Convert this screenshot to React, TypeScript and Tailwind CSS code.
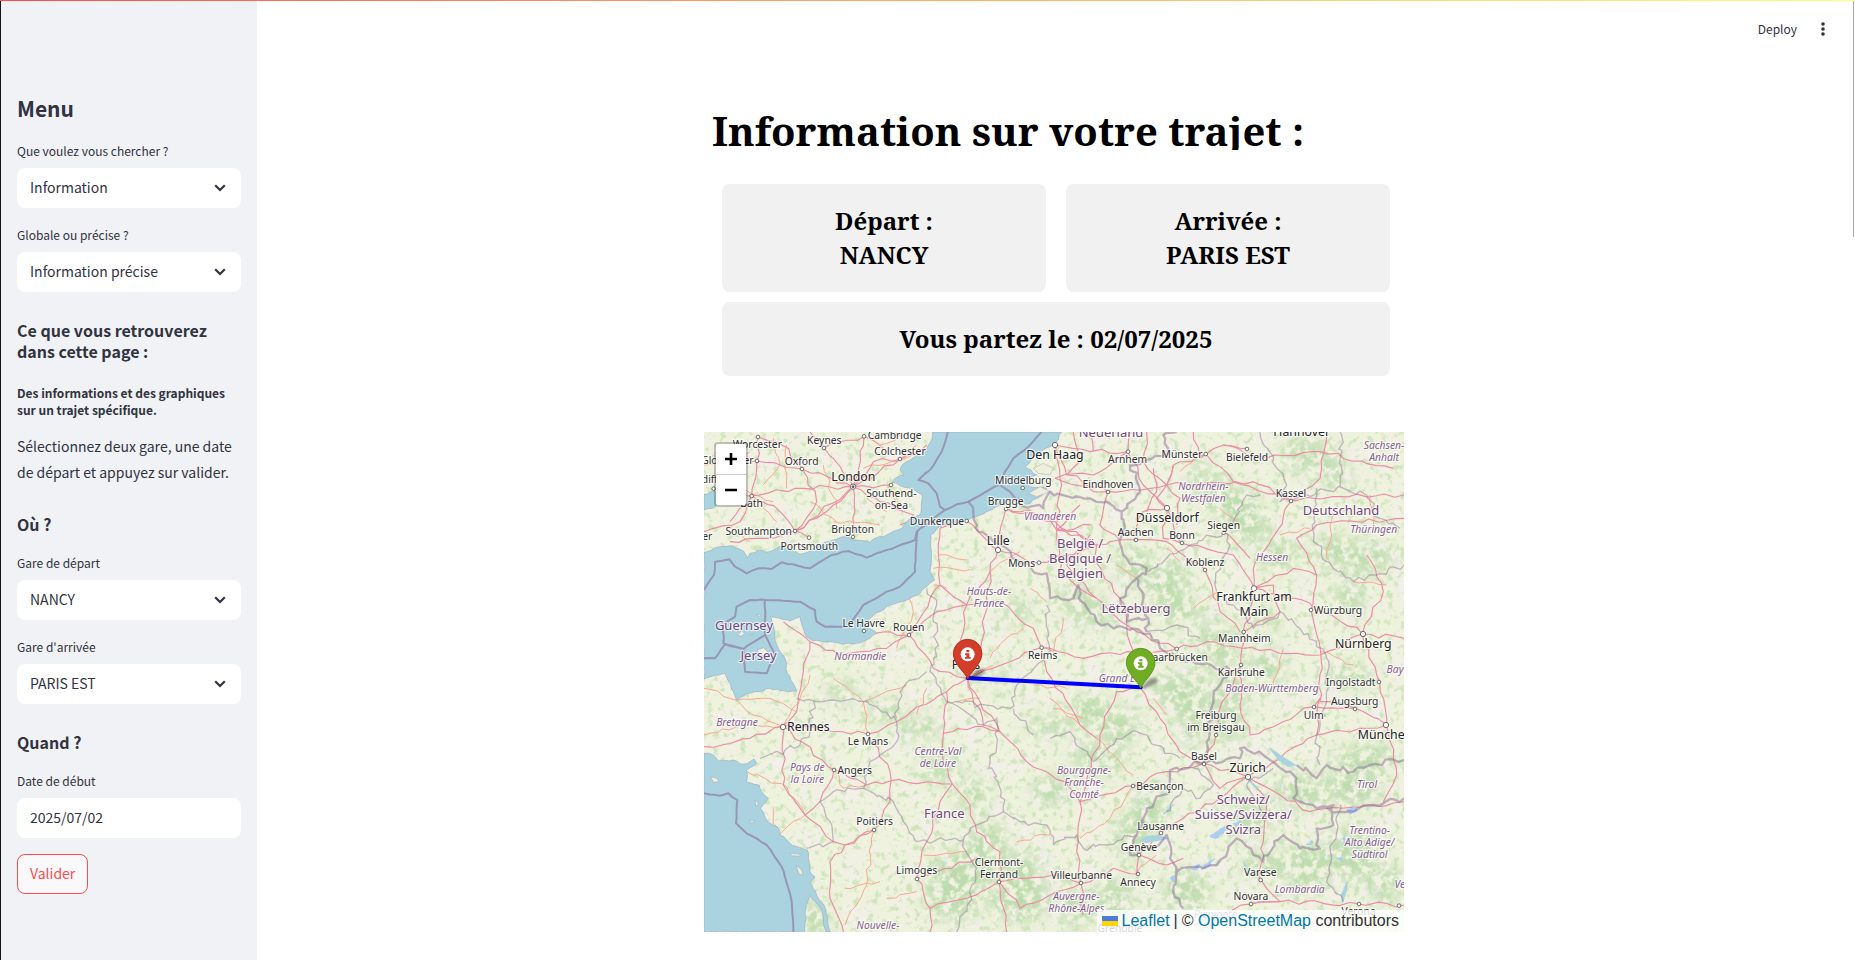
import React from "react";

type Label = { x: number; y: number; t: string[]; k: "city" | "big" | "country" | "region" };

const SEAS = [
  "698,21 695,45 680,70 650,90 630,105 608,118 600,135 612,150 585,160 575,172 600,182 640,192 668,212 664,240 662,268 625,285 605,310 570,325 525,340 510,352 470,345 430,335 400,345 350,365 330,378 300,388 270,372 245,362 210,380 175,375 150,385 143,398 130,378 90,362 60,365 35,375 12,383 12,762 45,750 75,745 85,768 100,800 110,826 140,806 180,800 210,790 240,798 290,798 280,775 262,745 255,700 230,660 225,620 212,575 240,580 270,588 300,575 306,600 318,635 340,648 390,650 430,658 470,655 510,640 530,625 495,600 510,580 560,545 620,525 660,505 680,485 704,465 690,440 695,380 692,330 720,305 770,295 800,288 860,260 915,235 940,220 980,238 1020,215 1040,190 990,185 975,170 1010,150 975,125 1010,90 1050,65 1075,45 1085,21",
  "12,985 40,990 55,1008 100,1005 130,1018 162,1002 170,1015 140,1035 140,1072 178,1080 185,1100 205,1120 182,1150 200,1185 235,1210 240,1230 270,1255 322,1275 325,1300 330,1340 345,1355 330,1372 350,1410 372,1440 390,1521 378,1521 362,1450 330,1412 318,1440 314,1521 12,1521",
  "12,208 45,198 60,225 40,250 12,255",
];
const ISLANDS = ["112,630 125,618 134,625 124,634", "172,675 190,668 204,680 190,690 176,686", "150,630 158,627 154,634", "168,570 182,568 178,575", "32,1055 50,1060 58,1070 40,1072", "165,1125 175,1135 168,1146", "148,1185 165,1188 155,1194", "270,1285 300,1288 300,1294 275,1292", "288,1320 305,1335 310,1352 296,1345", "1000,130 1030,115 1060,130 1050,150 1015,145", "985,205 1020,185 1050,200 1010,215"];

const HIGHWAYS = [
  "459,185 372,69 330,21", "459,185 492,34", "459,185 600,102 680,60", "459,185 306,132 171,108 12,120", "459,185 285,190 155,213 50,190", "459,185 285,318 327,338", "459,185 459,336", "459,185 573,180", "459,185 540,230 640,270 600,300", "306,132 350,230 285,318 200,340 90,350", "155,213 120,290 12,320", "174,36 171,108 155,213 90,290", "306,132 245,60 174,36", "372,69 492,34 560,80", "285,318 240,260 155,213", "459,185 520,110 600,102", "459,185 400,240 350,280 285,318",
  "720,310 800,288 894,375 1017,413 1190,360 1258,345", "720,310 715,390 720,480 800,540 870,440 894,375", "918,250 1065,290 1190,360", "918,250 894,375", "918,250 1040,270 1070,315 1175,300", "803,760 780,650 800,540", "803,760 845,650 870,440", "803,760 930,710 1025,668", "720,480 627,630 492,618", "800,540 900,530 1000,610 1025,668", "803,760 700,730 627,630", "627,630 560,670 420,690 330,650 250,590", "330,650 310,740 290,860 249,905", "627,630 710,560 800,540", "803,760 740,800 590,890 504,927", "803,760 850,900 900,920", "803,760 840,830 900,920 980,1010 1095,1070 1140,1130", "900,920 850,905 730,925 730,1010 757,1077", "740,800 730,925", "504,927 570,1040 570,1130 522,1215 435,1260", "757,1077 720,1130 680,1250 650,1360 690,1450 690,1521", "757,1077 810,1140 830,1220 900,1280 897,1370 920,1521", "249,905 402,1035 500,1080 570,1068 757,1077", "249,905 370,910 504,927", "249,905 150,940 12,965", "249,905 250,1080 315,1170 400,1250 435,1260", "402,1035 360,1130 315,1170", "435,1260 390,1310 390,1420 430,1521", "435,1260 522,1215", "650,1360 830,1300", "690,1450 800,1420 897,1370 1060,1350 1143,1375", "897,1370 960,1450 1143,1375",
  "1065,60 1170,80 1284,80", "1065,60 1100,150 1224,200 1400,180", "1284,80 1330,180 1400,250", "1284,80 1200,140 1065,160", "1224,200 1200,300 1258,345", "1400,250 1390,340 1446,355", "1400,180 1420,120 1518,87 1570,60 1640,70", "1518,87 1600,170 1773,228 1860,160 1880,21", "1773,228 1920,215 2112,210", "1773,228 1730,320 1660,430 1662,490", "1258,345 1400,350 1515,435", "1446,355 1600,390 1662,490", "1570,320 1650,400", "1400,180 1660,170 1773,228", "1662,490 1830,535 1987,627 2112,640", "1662,490 1650,580 1630,620 1622,720", "1630,670 1860,690 1987,627", "1833,555 1850,450 1790,340 1850,300 2112,280", "1833,555 1862,680 1860,830 1965,850 2060,900", "1987,627 2030,750 2060,900", "1987,627 2050,500 2000,390", "1622,720 1620,840 1650,930 1842,845 1965,850", "1622,720 1560,850 1548,930 1512,1015", "1430,672 1520,650 1630,670", "1430,672 1310,620 1280,600 1322,790", "1280,600 1260,520 1180,400 1190,360", "1025,668 1150,700 1280,680 1430,672", "1025,668 1040,740 1140,900 1190,940", "1322,790 1250,800 1200,930 1140,1130", "1322,790 1380,880 1440,980 1512,1015", "1140,1130 1299,1083 1400,1040 1512,1015", "1512,1015 1643,1055 1740,1000 1850,930 2060,900", "1643,1055 1560,1120 1450,1180 1383,1224 1317,1290", "1643,1055 1700,1120 1690,1250 1680,1370", "1512,1015 1560,1090 1643,1055", "1317,1290 1310,1347 1240,1330 1143,1375", "1140,1130 1130,1280 1143,1375 1150,1470", "1317,1290 1400,1320 1450,1300", "1643,1055 1740,1110 1830,1160 2112,1130", "1653,1437 1740,1430 1977,1437 2112,1440", "1683,1365 1740,1430 1653,1437 1480,1500", "1850,930 1860,820 1842,845", "2060,900 2090,1050 2050,1130",
  "1480,21 1500,100 1518,87", "1662,490 1780,430 1850,450", "1515,435 1560,560 1620,620", "1170,330 1100,420 1190,520 1280,600", "1070,315 1080,450 1190,520", "1400,250 1330,260 1300,330", "1570,60 1700,100 1860,80 2080,130", "1662,490 1720,480 1740,560 1630,620",
  "1065,60 1080,160 1070,315", "1180,80 1170,21", "1284,80 1290,21", "1340,21 1330,110 1400,180", "1120,21 1140,110 1100,150", "1400,180 1370,220 1400,250 1420,300 1446,355", "1420,120 1400,180 1440,220 1430,300", "1065,160 1180,200 1224,200", "1140,240 1070,315 1140,330 1190,360", "1360,130 1370,200 1340,260",
];
const TRUNKS = [
  "110,826 160,870 249,905", "12,790 110,826 210,820 290,860", "12,930 130,900 249,905", "249,905 300,820 330,750", "490,830 504,927", "400,760 490,830 620,780", "315,1170 230,1230 220,1150", "315,1170 260,1085 140,1040", "402,1035 430,1090 500,1080", "522,1215 500,1380 435,1500", "435,1390 540,1370", "590,670 640,560 627,520", "700,430 810,433", "715,390 800,405", "870,440 960,380", "700,480 740,490", "1040,530 990,490", "870,700 920,640 970,610", "803,760 880,720", "1000,780 1100,790", "1050,820 1140,900", "1299,1083 1230,1180 1140,1240", "1190,940 1300,1050", "1090,580 1060,680 1025,668", "1250,420 1310,460", "1400,370 1440,410", "1480,550 1560,500", "1750,670 1720,790", "1862,680 1960,720", "1960,470 2060,480", "1900,260 1880,400", "2010,210 2020,300", "1560,250 1620,300", "1500,90 1440,140", "1060,850 1150,880", "840,820 770,830", "650,1400 560,1420", "670,1290 800,1280", "680,790 650,870", "950,1250 1050,1230", "1310,1347 1370,1290", "1360,820 1400,870", "1740,330 1830,310", "220,40 240,120 190,180", "370,120 410,250", "540,60 600,30", "90,300 150,350", "230,290 190,250", "500,220 560,260", "650,60 600,102", "60,130 150,80", "400,290 540,300", "560,180 610,250", "130,190 220,230", "260,190 260,60", "490,130 660,90", "330,230 410,290",
];
const FRONTIERS = [
  "805,230 820,265 835,320 880,350 920,370 935,400 980,415 1000,440 1040,445 1050,520 1120,520 1135,480 1145,530 1190,590 1240,610 1290,615 1350,625 1380,670 1430,700 1520,715 1590,735 1570,760 1540,820 1520,950 1512,1010 1410,1035 1410,1090 1340,1150 1310,1230 1290,1290 1350,1270 1400,1230 1410,1300 1430,1340 1550,1320 1610,1240 1660,1290 1690,1310 1750,1230 1800,1270 1860,1270 1850,1210 1900,1200 1900,1140 1850,1150 1780,1120 1790,1060 1730,1020 1690,990 1620,970 1620,1000 1512,1015",
  "900,180 930,200 960,240 1030,250 1050,200 1170,220 1220,230 1265,260 1270,320 1258,350 1280,400 1340,430 1310,460 1330,520 1345,580 1340,620", "1345,580 1280,590 1260,520 1310,460", "1265,260 1320,200 1290,120 1400,90 1390,30 1430,21", "1790,1020 1850,1060 1880,1020 1960,1040 2010,1020 2112,1005", "1850,1150 1960,1160 2020,1140 2112,1120", "1430,1340 1420,1400 1450,1450",
];
const REGIONS = [
  "680,490 710,540 700,590 715,660 690,740 740,830 810,870 850,900 890,880 890,960 870,1010 900,1090 910,1160 960,1190 1040,1200 1060,1260", "290,820 400,825 490,830 590,890 590,950 510,1010 490,1090 400,1100 360,1130 395,1200 400,1250 320,1270", "340,825 330,920 300,960 180,1000", "490,1090 580,1130 610,1190 650,1250 790,1245 830,1200 910,1160", "590,880 600,800 680,740", "790,1245 830,1330 810,1430 770,1521", "740,830 930,850 950,780 1050,680 1040,540", "1000,930 940,850", "1050,940 1110,920 1180,1010 1250,940 1310,920 1390,970 1440,1000", "1060,1260 1130,1230 1150,1270 1220,1260 1310,1230", "1345,440 1400,400 1470,360 1570,320 1590,360 1560,420 1550,500 1600,540", "1570,320 1600,290 1640,210 1680,210", "1680,21 1720,100 1760,180 1740,230 1850,200 1930,190 1920,21", "1850,190 1840,350 1900,430 1960,470 2030,450 2112,420", "1600,540 1660,610 1700,590 1740,560 1800,610 1880,700 1880,830 1850,930 1860,1020", "1340,620 1430,600 1500,640", "1930,190 2000,210 2040,280 2100,310", "1920,1140 1900,1250 1880,1370 1930,1430", "1700,1180 1640,1080 1720,1030", "1480,1030 1540,1080 1500,1120 1450,1090 1400,1160",
];
const MARITIME = [
  "743,21 725,80 690,135 655,165 685,175 710,205 720,245 735,255 770,238 805,230 850,205 895,180", "1024,21 985,65 940,100 915,140 895,180", "735,255 690,290 650,320 645,345 590,365 530,385 500,398 445,378 395,390 330,430 245,412 215,432 175,430 140,445 105,425 88,403 45,410 42,450 12,495", "652,320 645,440 600,485 560,500 490,540 455,590", "450,605 375,605 350,590 345,555 300,530 200,525 150,525 110,545 105,575 70,595 70,655 130,672 195,630 195,525", "12,700 45,700 75,658 130,672", "130,672 135,740 200,745 225,690 195,630", "12,1105 60,1112 85,1105 112,1125 108,1195 140,1225 200,1260 245,1325 265,1390 275,1430 280,1521",
];
const LAKES = ["1325,1245 1340,1235 1375,1233 1405,1240 1350,1250 1328,1255", "1390,1168 1420,1138 1408,1154", "1710,970 1745,995 1785,1020 1765,1024 1738,1006", "1925,1410 1942,1370 1938,1400 1928,1428", "1632,1310 1645,1345 1640,1350", "1645,1065 1675,1090 1668,1088"];
/* Glaciers of the Alps */
const GLACIERS = ["1530,1235 1560,1212 1590,1198 1570,1225 1545,1240", "1600,1195 1625,1188 1610,1205", "1512,1320 1545,1300 1530,1322 1505,1335", "1470,1330 1500,1318 1490,1335", "1818,1258 1838,1248 1836,1258", "1940,1155 1965,1145 1970,1160 1950,1168", "1910,1300 1925,1295 1925,1306", "1410,1360 1425,1352 1420,1370", "1928,1240 1934,1234 1934,1250"];

/* x, y, radius x, radius y of the wooded areas */
const WOODS = [
  [1530, 190, 60, 30], [1600, 240, 70, 55], [1790, 90, 40, 50], [1900, 150, 60, 30], [1640, 300, 70, 50], [1740, 390, 60, 50], [1400, 470, 70, 60], [1300, 420, 50, 60], [1440, 560, 70, 40], [1550, 660, 60, 70], [1690, 590, 50, 30], [1130, 520, 50, 50], [1190, 570, 60, 40], [1480, 850, 45, 120], [1590, 850, 45, 110], [1420, 800, 50, 60], [1350, 1150, 50, 70], [1300, 1230, 50, 80], [1200, 1000, 80, 50], [1050, 1100, 50, 50], [860, 1250, 60, 60], [780, 1340, 90, 60], [760, 1420, 90, 60], [960, 1340, 70, 60], [960, 1420, 90, 70], [345, 1480, 45, 60], [1130, 1450, 50, 60], [1900, 380, 60, 50], [1950, 520, 50, 50], [2010, 400, 70, 50], [1950, 750, 80, 30], [2000, 1000, 100, 40], [1800, 1100, 80, 50], [1960, 1090, 80, 60], [1820, 1330, 60, 80], [1700, 1320, 80, 40], [1460, 1400, 70, 60], [1950, 1290, 80, 80], [1650, 1180, 70, 50], [720, 1030, 60, 40], [560, 860, 60, 30], [900, 760, 40, 30], [1050, 900, 70, 30], [1170, 860, 60, 50], [430, 800, 50, 30], [950, 560, 40, 40], [660, 910, 60, 30], [1500, 130, 40, 20], [1240, 1420, 60, 60], [2060, 1380, 50, 60], [820, 1110, 50, 50], [1700, 730, 50, 60], [1260, 900, 60, 50], [1860, 90, 50, 40],
];

const LABELS: Label[] = [
  { x: 172, y: 68, t: ["Worcester"], k: "city" }, { x: 373, y: 56, t: ["Keynes"], k: "city" }, { x: 584, y: 43, t: ["Cambridge"], k: "city" },
  { x: 600, y: 90, t: ["Colchester"], k: "city" }, { x: 305, y: 120, t: ["Oxford"], k: "city" }, { x: 82, y: 118, t: ["Gloucester"], k: "city" },
  { x: 5, y: 175, t: ["Cardiff"], k: "city" }, { x: 460, y: 168, t: ["London"], k: "big" }, { x: 574, y: 215, t: ["Southend-", "on-Sea"], k: "city" },
  { x: 155, y: 247, t: ["Bath"], k: "city" }, { x: 176, y: 330, t: ["Southampton"], k: "city" }, { x: 458, y: 324, t: ["Brighton"], k: "city" },
  { x: 328, y: 374, t: ["Portsmouth"], k: "city" }, { x: -9, y: 344, t: ["Exeter"], k: "city" }, { x: 711, y: 301, t: ["Dunkerque"], k: "city" },
  { x: 917, y: 240, t: ["Brugge"], k: "city" }, { x: 970, y: 176, t: ["Middelburg"], k: "city" }, { x: 1065, y: 103, t: ["Den Haag"], k: "big" },
  { x: 895, y: 360, t: ["Lille"], k: "big" }, { x: 965, y: 425, t: ["Mons"], k: "city" }, { x: 1050, y: 286, t: ["Vlaanderen"], k: "region" },
  { x: 867, y: 511, t: ["Hauts-de-", "France"], k: "region" }, { x: 491, y: 607, t: ["Le Havre"], k: "city" }, { x: 626, y: 618, t: ["Rouen"], k: "city" },
  { x: 132, y: 614, t: ["Guernsey"], k: "country" }, { x: 176, y: 704, t: ["Jersey"], k: "country" }, { x: 481, y: 704, t: ["Normandie"], k: "region" },
  { x: 1028, y: 701, t: ["Reims"], k: "city" }, { x: 798, y: 733, t: ["Paris"], k: "big" },
  { x: 1233, y: 36, t: ["Nederland"], k: "country" }, { x: 1805, y: 34, t: ["Hannover"], k: "big" }, { x: 1283, y: 114, t: ["Arnhem"], k: "city" },
  { x: 1446, y: 98, t: ["Münster"], k: "city" }, { x: 1641, y: 108, t: ["Bielefeld"], k: "city" }, { x: 2052, y: 71, t: ["Sachsen-", "Anhalt"], k: "region" },
  { x: 1224, y: 189, t: ["Eindhoven"], k: "city" }, { x: 1510, y: 195, t: ["Nordrhein-", "Westfalen"], k: "region" }, { x: 1773, y: 216, t: ["Kassel"], k: "city" },
  { x: 1923, y: 270, t: ["Deutschland"], k: "country" }, { x: 2021, y: 323, t: ["Thüringen"], k: "region" }, { x: 1402, y: 291, t: ["Düsseldorf"], k: "big" },
  { x: 1571, y: 312, t: ["Siegen"], k: "city" }, { x: 1307, y: 334, t: ["Aachen"], k: "city" }, { x: 1446, y: 342, t: ["Bonn"], k: "city" },
  { x: 1140, y: 369, t: ["België /", "Belgique /", "Belgien"], k: "country" }, { x: 1515, y: 424, t: ["Koblenz"], k: "city" }, { x: 1716, y: 407, t: ["Hessen"], k: "region" },
  { x: 1662, y: 528, t: ["Frankfurt am", "Main"], k: "big" }, { x: 1308, y: 564, t: ["Lëtzebuerg"], k: "country" }, { x: 1914, y: 567, t: ["Würzburg"], k: "city" },
  { x: 1633, y: 652, t: ["Mannheim"], k: "city" }, { x: 1990, y: 670, t: ["Nürnberg"], k: "big" }, { x: 1432, y: 708, t: ["Saarbrücken"], k: "city" },
  { x: 1624, y: 754, t: ["Karlsruhe"], k: "city" }, { x: 2108, y: 745, t: ["Bayern"], k: "region" }, { x: 1263, y: 771, t: ["Grand Est"], k: "region" },
  { x: 111, y: 904, t: ["Bretagne"], k: "region" }, { x: 325, y: 917, t: ["Rennes"], k: "big" }, { x: 504, y: 959, t: ["Le Mans"], k: "city" },
  { x: 714, y: 990, t: ["Centre-Val", "de Loire"], k: "region" }, { x: 322, y: 1037, t: ["Pays de", "la Loire"], k: "region" }, { x: 464, y: 1046, t: ["Angers"], k: "city" },
  { x: 524, y: 1201, t: ["Poitiers"], k: "city" }, { x: 733, y: 1178, t: ["France"], k: "country" }, { x: 650, y: 1348, t: ["Limoges"], k: "city" },
  { x: 897, y: 1324, t: ["Clermont-", "Ferrand"], k: "city" }, { x: 534, y: 1512, t: ["Nouvelle-"], k: "region" },
  { x: 1716, y: 801, t: ["Baden-Württemberg"], k: "region" }, { x: 1952, y: 782, t: ["Ingolstadt"], k: "city" }, { x: 1964, y: 841, t: ["Augsburg"], k: "city" },
  { x: 1841, y: 881, t: ["Ulm"], k: "city" }, { x: 1548, y: 881, t: ["Freiburg", "im Breisgau"], k: "city" }, { x: 2055, y: 943, t: ["München"], k: "big" },
  { x: 1512, y: 1006, t: ["Basel"], k: "city" }, { x: 1643, y: 1041, t: ["Zürich"], k: "big" }, { x: 1152, y: 1047, t: ["Bourgogne-", "Franche-", "Comté"], k: "region" },
  { x: 1380, y: 1094, t: ["Besançon"], k: "city" }, { x: 2001, y: 1089, t: ["Tirol"], k: "region" }, { x: 1630, y: 1137, t: ["Schweiz/", "Suisse/Svizzera/", "Svizra"], k: "country" },
  { x: 1382, y: 1214, t: ["Lausanne"], k: "city" }, { x: 1317, y: 1277, t: ["Genève"], k: "city" }, { x: 2009, y: 1226, t: ["Trentino-", "Alto Adige/", "Südtirol"], k: "region" },
  { x: 1144, y: 1361, t: ["Villeurbanne"], k: "city" }, { x: 1314, y: 1384, t: ["Annecy"], k: "city" }, { x: 1681, y: 1352, t: ["Varese"], k: "city" },
  { x: 1653, y: 1425, t: ["Novara"], k: "city" }, { x: 1799, y: 1405, t: ["Lombardia"], k: "region" }, { x: 2130, y: 1390, t: ["Veneto"], k: "region" },
  { x: 1129, y: 1424, t: ["Auvergne-", "Rhône-Alpes"], k: "region" }, { x: 1546, y: 1478, t: ["Piemonte"], k: "region" }, { x: 1976, y: 1470, t: ["Verona"], k: "city" },
  { x: 1260, y: 1521, t: ["Grenoble"], k: "city" },
];

const DOTS = "174,36 372,69 492,34 600,102 306,132 171,108 41,191 573,180 155,213 285,318 459,336 327,338 800,288 918,252 968,189 1017,413 492,618 627,630 1025,668 1284,80 1517,87 1641,72 1224,201 1773,228 1571,323 1308,345 1446,354 1515,435 1833,555 1631,621 1430,672 1623,720 504,927 402,1035 522,1215 651,1362 897,1371 2037,771 1965,852 1842,846 1548,930 1512,1017 1299,1083 1383,1224 1317,1290 1314,1347 1143,1374 1682,1365 1653,1437 1977,1437 2097,1442".split(" ");
const BIG_DOTS = "894,375 1065,60 1401,249 1662,490 1989,627 249,906 2058,900 1644,1056".split(" ");

/* Breaks each segment into small steps with a repeatable sideways offset. */
function wiggle(points: string, amplitude: number, step: number): string {
  const pts = points.split(" ").map((p) => p.split(",").map(Number));
  let seed = pts[0][0] * 31 + pts[0][1] * 17 + 7;
  const random = () => {
    seed = (seed * 16807 + 11) % 2147483647;
    return seed / 2147483647 - 0.5;
  };
  for (let i = 0; i < 4; i++) random();
  let d = `M${pts[0][0]} ${pts[0][1]}`;
  for (let i = 1; i < pts.length; i++) {
    const [x0, y0] = pts[i - 1];
    const [x1, y1] = pts[i];
    const n = Math.max(1, Math.round(Math.hypot(x1 - x0, y1 - y0) / step));
    for (let j = 1; j < n; j++) {
      const t = j / n;
      d += `L${(x0 + (x1 - x0) * t + random() * amplitude).toFixed(1)} ${(y0 + (y1 - y0) * t + random() * amplitude).toFixed(1)}`;
    }
    d += `L${x1} ${y1}`;
  }
  return d;
}

const LABEL_STYLE = {
  city: { size: 31, lead: 36, fill: "#303030", italic: false },
  big: { size: 37, lead: 46, fill: "#222222", italic: false },
  country: { size: 39, lead: 45, fill: "#71487a", italic: false },
  region: { size: 31, lead: 36, fill: "#86608f", italic: true },
};

function Pin({ x, y, color, edge }: { x: number; y: number; color: string; edge: string }) {
  return (
    <g transform={`translate(${x} ${y})`}>
      <path d="M0 0L28 -28Q52 -34 52 -22Q42 -6 10 0Z" fill="#000" opacity="0.38" filter="url(#soft)" />
      <path d="M0 0C-5 -16 -43 -46 -43 -76A43 43 0 0 1 43 -76C43 -46 5 -16 0 0Z" fill={color} stroke={edge} strokeWidth="3" />
      <circle cy="-74" r="21" fill="#fff" />
      <path d="M-4 -87H5V-80H-4ZM-8 -77H5V-66H9V-61H-8V-66H-4V-72H-8Z" fill={color} />
    </g>
  );
}

function MapDrawing() {
  return (
    <svg viewBox="12 21 2100 1500" preserveAspectRatio="xMidYMid slice" className="block h-full w-full font-['Noto_Sans',sans-serif]" role="img" aria-label="Carte du trajet NANCY - PARIS EST">
      <defs>
        <filter id="soft" x="-50%" y="-50%" width="200%" height="200%">
          <feGaussianBlur stdDeviation="5" />
        </filter>
        <filter id="fields" x="0" y="0" width="100%" height="100%" colorInterpolationFilters="sRGB">
          <feTurbulence type="fractalNoise" baseFrequency="0.05" numOctaves="5" seed="4" />
          <feColorMatrix values="0 0 0 0 0.81  0 0 0 0 0.9  0 0 0 0 0.74  5 0 0 0 -2.7" />
        </filter>
        <filter id="towns" x="0" y="0" width="100%" height="100%" colorInterpolationFilters="sRGB">
          <feTurbulence type="fractalNoise" baseFrequency="0.014" numOctaves="5" seed="19" />
          <feColorMatrix values="0 0 0 0 0.95  0 0 0 0 0.94  0 0 0 0 0.91  0 3 0 0 -1.3" />
        </filter>
        <filter id="woods" x="-10%" y="-10%" width="120%" height="120%" colorInterpolationFilters="sRGB">
          <feGaussianBlur in="SourceGraphic" stdDeviation="26" result="area" />
          <feTurbulence type="fractalNoise" baseFrequency="0.04" numOctaves="5" seed="8" />
          <feColorMatrix values="0 0 0 0 0.74  0 0 0 0 0.86  0 0 0 0 0.68  0 5 0 0 -1.9" result="noise" />
          <feComposite in="noise" in2="area" operator="in" />
        </filter>
      </defs>
      <rect x="0" y="0" width="2130" height="1540" fill="#eff2dd" />
      <rect x="0" y="0" width="2130" height="1540" filter="url(#towns)" />
      <rect x="0" y="0" width="2130" height="1540" filter="url(#fields)" />
      <g filter="url(#woods)">
        {WOODS.map(([x, y, rx, ry], i) => (
          <ellipse key={i} cx={x} cy={y} rx={rx} ry={ry} fill="#add19e" />
        ))}
      </g>
      <g fill="none" strokeLinejoin="round">
        <g stroke="#fba98f" strokeWidth="3">
          {TRUNKS.map((p) => <path key={p} d={wiggle(p, 13, 22)} />)}
        </g>
        <g stroke="#ec8ba3" strokeWidth="3.4">
          {HIGHWAYS.map((p) => <path key={p} d={wiggle(p, 14, 26)} />)}
        </g>
      </g>
      <g fill="#aad3df">
        {SEAS.map((p) => <path key={p} d={wiggle(p, 6, 12) + "Z"} stroke="#8f9fbd" strokeWidth="1.5" />)}
        {LAKES.map((p) => <polygon key={p} points={p} stroke="#aad3df" strokeWidth="4" />)}
      </g>
      <g fill="#a9cdf5" stroke="#a9cdf5" strokeWidth="3">
        {GLACIERS.map((p) => <path key={p} d={wiggle(p, 8, 8) + "Z"} />)}
      </g>
      {ISLANDS.map((p) => <polygon key={p} points={p} fill="#f0efdc" stroke="#9aa5b8" strokeWidth="1.5" />)}
      <g fill="none" stroke="#8d6e99" strokeLinejoin="round">
        <g strokeWidth="6" opacity="0.6">{MARITIME.map((p) => <path key={p} d={wiggle(p, 3, 18)} />)}</g>
        <g strokeWidth="7" opacity="0.5">{FRONTIERS.map((p) => <path key={p} d={wiggle(p, 18, 16)} />)}</g>
        <g strokeWidth="4" opacity="0.45">{REGIONS.map((p) => <path key={p} d={wiggle(p, 18, 15)} />)}</g>
      </g>
      <g fill="#fff" stroke="#555" strokeWidth="2.5">
        {DOTS.map((p) => <circle key={p} cx={p.split(",")[0]} cy={p.split(",")[1]} r="5.5" />)}
        {BIG_DOTS.map((p) => <circle key={p} cx={p.split(",")[0]} cy={p.split(",")[1]} r="8" />)}
        <circle cx="459" cy="185" r="8" />
        <circle cx="459" cy="185" r="3" fill="#555" />
      </g>
      <g textAnchor="middle" stroke="#fff" strokeOpacity="0.7" strokeWidth="7" strokeLinejoin="round" paintOrder="stroke">
        {LABELS.map(({ x, y, t, k }) => {
          const s = LABEL_STYLE[k];
          return (
            <text key={t[0]} fontSize={s.size} fill={s.fill} fontStyle={s.italic ? "italic" : "normal"}>
              {t.map((line, i) => <tspan key={line} x={x} y={y + i * s.lead}>{line}</tspan>)}
            </text>
          );
        })}
      </g>
      <path d="M803 759L1322 787" stroke="#0000ff" strokeWidth="12" strokeLinecap="round" />
      <Pin x={803} y={762} color="#d33d29" edge="#b03222" />
      <Pin x={1322} y={789} color="#70ad25" edge="#5f9520" />
    </svg>
  );
}

function SelectField({ id, label, value, options }: { id: string; label: string; value: string; options: string[] }) {
  return (
    <div>
      <label htmlFor={id} className="mb-1.5 block text-xs leading-[22px]">{label}</label>
      <div className="grid items-center">
        <select id={id} defaultValue={value} className="col-start-1 row-start-1 h-10 w-full appearance-none rounded-lg bg-white pr-9 pb-0.5 pl-[13px] text-sm outline-none">
          {options.map((o) => <option key={o}>{o}</option>)}
        </select>
        <svg viewBox="0 0 12 8" className="pointer-events-none col-start-1 row-start-1 mr-[15px] h-2 w-3 justify-self-end" fill="none" stroke="#31333f" strokeWidth="2.2">
          <path d="M1.2 1.2L6 6L10.8 1.2" />
        </svg>
      </div>
    </div>
  );
}

export default function App() {
  return (
    <div className="flex min-h-screen flex-col bg-white font-['Source_Sans_Pro','Noto_Sans_CJK_SC',sans-serif] text-[#31333f]">
      <div className="h-px bg-linear-to-r from-[#ff4b4b] to-[#fffd80]" />
      <div className="flex flex-1">
        <div className="w-px shrink-0 bg-[#14141f]" />
        <aside className="w-64 shrink-0 bg-[#f0f2f6] px-4 pt-[91px] pb-16">
          <h2 className="mb-4 text-[21px] leading-8 font-bold">Menu</h2>
          <div className="flex flex-col gap-4">
            <SelectField id="search" label="Que voulez vous chercher ?" value="Information" options={["Information", "Prédiction"]} />
            <SelectField id="scope" label="Globale ou précise ?" value="Information précise" options={["Information précise", "Information globale"]} />
          </div>
          <h3 className="mt-7 text-base leading-[21px] font-bold">Ce que vous retrouverez dans cette page :</h3>
          <h5 className="mt-[22px] text-xs leading-[17px] font-bold">Des informations et des graphiques sur un trajet spécifique.</h5>
          <p className="mt-[15px] text-sm leading-[26px]">Sélectionnez deux gare, une date de départ et appuyez sur valider.</p>
          <h3 className="mt-[27px] mb-4 text-base leading-6 font-bold">Où ?</h3>
          <div className="flex flex-col gap-4">
            <SelectField id="from" label="Gare de départ" value="NANCY" options={["NANCY", "PARIS EST"]} />
            <SelectField id="to" label="Gare d'arrivée" value="PARIS EST" options={["PARIS EST", "NANCY"]} />
          </div>
          <h3 className="mt-[26px] mb-4 text-base leading-6 font-bold">Quand ?</h3>
          <label htmlFor="date" className="mb-1.5 block text-xs leading-[22px]">Date de début</label>
          <input id="date" defaultValue="2025/07/02" className="h-10 w-full rounded-lg bg-white px-[13px] pb-0.5 text-sm outline-none" />
          <button className="mt-4 block h-10 rounded-lg border border-[#ff4b4b] bg-[#f9f9fb] px-3 pb-0.5 text-sm text-[#ff4b4b]">Valider</button>
        </aside>
        <div className="flex min-w-0 flex-1 flex-col">
          <header className="flex h-14 items-center justify-end gap-6 pr-7">
            <button className="text-xs">Deploy</button>
            <button aria-label="Menu principal" className="w-1">
              <svg viewBox="0 0 4 14" className="h-3.5 w-1" fill="#31333f">
                <circle cx="2" cy="2" r="1.8" /><circle cx="2" cy="7" r="1.8" /><circle cx="2" cy="12" r="1.8" />
              </svg>
            </button>
          </header>
          <main className="mx-auto w-full max-w-[706px] pr-1 pl-0.5">
            <h1 className="mt-[52px] h-[41px] overflow-hidden px-2 font-['Noto_Serif','DejaVu_Serif_Condensed','DejaVu_Serif',serif] text-[40px] leading-[44px] font-bold whitespace-nowrap text-black">Information sur votre trajet :</h1>
            <section className="mt-[34px] grid grid-cols-2 gap-x-5 gap-y-2.5 px-[18px] pr-3.5 text-center font-['Noto_Serif','DejaVu_Serif_Condensed','DejaVu_Serif',serif] text-2xl leading-[34px] font-bold text-black">
              <div className="rounded-lg bg-[#f1f1f1] p-5">Départ :<br />NANCY</div>
              <div className="rounded-lg bg-[#f1f1f1] p-5">Arrivée :<br />PARIS EST</div>
              <div className="col-span-2 rounded-lg bg-[#f1f1f1] p-5">Vous partez le : 02/07/2025</div>
            </section>
            <section className="relative mt-14 mb-7 h-[500px] overflow-hidden">
              <MapDrawing />
              <div className="absolute top-2.5 left-2.5 flex flex-col overflow-hidden rounded border-2 border-black/20 bg-clip-padding text-black">
                <button aria-label="Zoom avant" className="flex h-[31px] w-[30px] items-center justify-center border-b border-[#ccc] bg-white">
                  <svg viewBox="0 0 12 12" className="size-3" stroke="#000" strokeWidth="2.6"><path d="M6 0V12M0 6H12" /></svg>
                </button>
                <button aria-label="Zoom arrière" className="flex h-[30px] w-[30px] items-center justify-center bg-white">
                  <svg viewBox="0 0 12 12" className="size-3" stroke="#000" strokeWidth="2.6"><path d="M0 6H12" /></svg>
                </button>
              </div>
              <div className="absolute right-0 bottom-0 flex h-[22px] items-center gap-1 bg-white/80 px-[5px] font-['Liberation_Sans',sans-serif] text-base text-[#333]">
                <a href="#leaflet" className="flex items-center gap-1 text-[#0078a8]">
                  <svg viewBox="0 0 16 10" className="h-2.5 w-4"><path fill="#4c7be1" d="M0 0H16V5H0Z" /><path fill="#ffd500" d="M0 5H16V10H0Z" /></svg>
                  Leaflet
                </a>
                <span>|</span>
                <span>© <a href="#osm" className="text-[#0078a8]">OpenStreetMap</a> contributors</span>
              </div>
            </section>
          </main>
        </div>
        <div className="h-[236px] w-px shrink-0 bg-[#a9a9ab]" />
        <div className="w-px shrink-0" />
      </div>
    </div>
  );
}
